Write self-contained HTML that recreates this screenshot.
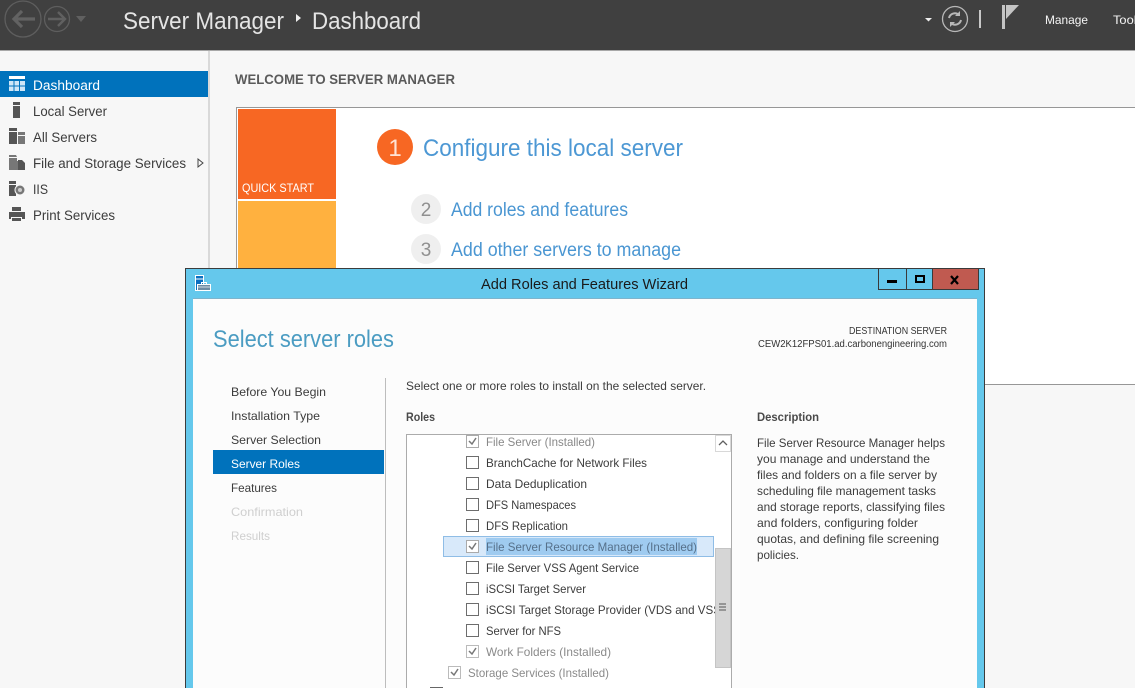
<!DOCTYPE html>
<html><head><meta charset="utf-8"><style>
html,body{margin:0;padding:0;width:1135px;height:688px;overflow:hidden;background:#fff}
svg{display:block}
text{font-family:"Liberation Sans",sans-serif;font-size:12px;fill:#3c3c3c}
</style></head><body>
<svg width="1135" height="688" viewBox="0 0 1135 688" xmlns="http://www.w3.org/2000/svg">
<defs><clipPath id="lst"><rect x="407" y="435" width="308" height="253"/></clipPath></defs>
<rect width="1135" height="688" fill="#f7f7f7"/>
<rect width="1135" height="50" fill="#404040"/>
<rect y="50" width="1135" height="1" fill="#a8a8a8"/>
<rect x="208" y="51" width="2" height="637" fill="#d9d9d9"/>

<!-- header nav -->
<g fill="none" stroke="#5e5e5e" stroke-width="1.300">
<circle cx="23" cy="19" r="18"/>
<circle cx="57" cy="19" r="12.500"/>
</g>
<path d="M35 19H14M22 11l-8 8 8 8" fill="none" stroke="#626262" stroke-width="3.200"/>
<path d="M48 19H65M58 12l7 7-7 7" fill="none" stroke="#606060" stroke-width="2.400"/>
<path d="M76 16h10l-5 6z" fill="#606060"/>
<text x="123" y="29" style="font-size:24px;fill:#e4e4e4" textLength="161" lengthAdjust="spacingAndGlyphs">Server Manager</text>
<path d="M296 14l5 4-5 4z" fill="#eee"/>
<text x="312" y="29" style="font-size:24px;fill:#e4e4e4" textLength="109" lengthAdjust="spacingAndGlyphs">Dashboard</text>
<path d="M925 18h7l-3.500 3.500z" fill="#eee"/>
<circle cx="955" cy="19" r="12.500" fill="none" stroke="#b8b8b8" stroke-width="1.300"/>
<path d="M949 18a6 6 0 0 1 10-3M961 20a6 6 0 0 1-10 3" fill="none" stroke="#b8b8b8" stroke-width="2"/>
<path d="M960 11v5h-5zM950 27v-5h5z" fill="#b8b8b8"/>
<rect x="979" y="10" width="2" height="18" fill="#c8c8c8"/>
<rect x="1002" y="5" width="3" height="24" fill="#c4c4c4"/>
<path d="M1006 5h13l-13 14z" fill="#c4c4c4"/>
<text x="1045" y="24" style="fill:#f5f5f5" textLength="43" lengthAdjust="spacingAndGlyphs">Manage</text>
<text x="1113" y="24" style="fill:#f5f5f5" textLength="30" lengthAdjust="spacingAndGlyphs">Tools</text>

<!-- sidebar -->
<rect y="71" width="208" height="26" fill="#0072bc"/>
<g fill="#cfe6f7"><rect x="9" y="76" width="16" height="3" fill="#fff"/><rect x="9" y="81" width="4.500" height="4.500"/><rect x="14.500" y="81" width="4.500" height="4.500"/><rect x="20" y="81" width="5" height="4.500"/><rect x="9" y="86.500" width="4.500" height="4.500"/><rect x="14.500" y="86.500" width="4.500" height="4.500"/><rect x="20" y="86.500" width="5" height="4.500"/></g>
<text x="33" y="90" style="font-size:13.500px;fill:#fff" textLength="67" lengthAdjust="spacingAndGlyphs">Dashboard</text>
<rect x="13" y="102" width="7" height="3" fill="#555"/><rect x="13" y="106" width="7" height="12" fill="#555"/>
<text x="33" y="116" style="font-size:13.500px" textLength="74" lengthAdjust="spacingAndGlyphs">Local Server</text>
<rect x="9" y="128" width="8" height="3" fill="#555"/><rect x="9" y="132" width="8" height="12" fill="#555"/><rect x="18" y="132" width="7" height="3" fill="#777"/><rect x="18" y="136" width="7" height="8" fill="#777"/>
<text x="33" y="142" style="font-size:13.500px" textLength="64" lengthAdjust="spacingAndGlyphs">All Servers</text>
<path d="M9 155h7l1 2h-8zM9 158h8v3h1v9H9z" fill="#777"/><path d="M18 160h4l3 3v7h-7z" fill="#555"/>
<text x="33" y="168" style="font-size:13.500px" textLength="153" lengthAdjust="spacingAndGlyphs">File and Storage Services</text>
<path d="M198 159l5 4-5 4z" fill="none" stroke="#444"/>
<rect x="9" y="181" width="7" height="3" fill="#555"/><rect x="9" y="185" width="7" height="11" fill="#555"/><circle cx="20" cy="190" r="5" fill="#777" stroke="#f7f7f7"/><circle cx="20" cy="190" r="2" fill="#ccc"/>
<text x="33" y="194" style="font-size:13.500px" textLength="15" lengthAdjust="spacingAndGlyphs">IIS</text>
<path d="M12 207h9v4h-9zM9 212h16v7h-3v-2H11v2H9zM12 218h9v3h-9z" fill="#555"/>
<text x="33" y="220" style="font-size:13.500px" textLength="82" lengthAdjust="spacingAndGlyphs">Print Services</text>

<!-- welcome -->
<text x="235" y="84" style="font-size:13.500px;font-weight:bold;fill:#5a5a5a" textLength="220" lengthAdjust="spacingAndGlyphs">WELCOME TO SERVER MANAGER</text>
<rect x="236.500" y="107.500" width="900" height="277" fill="#fff" stroke="#979797"/>
<rect x="238" y="109" width="98" height="90" fill="#f76723"/>
<rect x="238" y="201" width="98" height="70" fill="#ffb13f"/>
<text x="242" y="192" style="fill:#fff" textLength="72" lengthAdjust="spacingAndGlyphs">QUICK START</text>
<circle cx="395" cy="147" r="18" fill="#f76723"/>
<text x="395" y="156" text-anchor="middle" style="font-size:24px;fill:#ffe3d5">1</text>
<text x="423" y="156" style="font-size:24px;fill:#4d98d4" textLength="260" lengthAdjust="spacingAndGlyphs">Configure this local server</text>
<circle cx="426" cy="209" r="15" fill="#efefef"/><circle cx="426" cy="249" r="15" fill="#efefef"/>
<text x="426" y="216" text-anchor="middle" style="font-size:19px;fill:#909090">2</text>
<text x="426" y="256" text-anchor="middle" style="font-size:19px;fill:#909090">3</text>
<text x="451" y="216" style="font-size:19px;fill:#4a96d2" textLength="177" lengthAdjust="spacingAndGlyphs">Add roles and features</text>
<text x="451" y="256" style="font-size:19px;fill:#4a96d2" textLength="230" lengthAdjust="spacingAndGlyphs">Add other servers to manage</text>

<!-- wizard -->
<rect x="185" y="268" width="800" height="420" fill="#3c3c3c"/>
<rect x="186" y="269" width="798" height="419" fill="#65c8ec"/>
<rect x="193" y="298" width="784" height="1" fill="#7eb4cc"/>
<rect x="193" y="299" width="784" height="389" fill="#fcfcfc"/>
<rect x="195.500" y="275.500" width="8" height="15" fill="#0a6fc0" stroke="#fff"/>
<path d="M196 279h7" stroke="#fff"/>
<path d="M197.500 284.500h13v6h-13z" fill="#6f8ca3" stroke="#fff"/>
<path d="M201.500 284v-1.500h5v1.500" fill="none" stroke="#fff"/>
<path d="M198 287h12" stroke="#fff" stroke-width=".7"/>
<text x="481" y="289" style="font-size:14.500px;fill:#1a1a1a" textLength="207" lengthAdjust="spacingAndGlyphs">Add Roles and Features Wizard</text>
<rect x="878.500" y="268.500" width="28" height="21" fill="#65c8ec" stroke="#3a3a3a"/>
<rect x="906.500" y="268.500" width="26" height="21" fill="#65c8ec" stroke="#3a3a3a"/>
<rect x="932.500" y="268.500" width="46" height="21" fill="#c05a50" stroke="#3a3a3a"/>
<rect x="887" y="280" width="10" height="3" fill="#000"/>
<rect x="916" y="276" width="8" height="6" fill="none" stroke="#000" stroke-width="2"/>
<path d="M951 276l7 8M958 276l-7 8" stroke="#000" stroke-width="2.200"/>

<text x="213" y="347" style="font-size:24px;fill:#4b9cc2" textLength="181" lengthAdjust="spacingAndGlyphs">Select server roles</text>
<text x="947" y="334" text-anchor="end" style="font-size:10px;fill:#333" textLength="98" lengthAdjust="spacingAndGlyphs">DESTINATION SERVER</text>
<text x="758" y="347" style="font-size:10px;fill:#333" textLength="189" lengthAdjust="spacingAndGlyphs">CEW2K12FPS01.ad.carbonengineering.com</text>

<rect x="385" y="378" width="1" height="310" fill="#bdbdbd"/>
<rect x="213" y="450" width="171" height="24" fill="#0072bc"/>
<text x="231" y="396" textLength="95" lengthAdjust="spacingAndGlyphs">Before You Begin</text>
<text x="231" y="420" textLength="89" lengthAdjust="spacingAndGlyphs">Installation Type</text>
<text x="231" y="444" textLength="90" lengthAdjust="spacingAndGlyphs">Server Selection</text>
<text x="231" y="468" style="fill:#fff" textLength="69" lengthAdjust="spacingAndGlyphs">Server Roles</text>
<text x="231" y="492" textLength="46" lengthAdjust="spacingAndGlyphs">Features</text>
<text x="231" y="516" style="fill:#cfcfcf" textLength="72" lengthAdjust="spacingAndGlyphs">Confirmation</text>
<text x="231" y="540" style="fill:#cfcfcf" textLength="39" lengthAdjust="spacingAndGlyphs">Results</text>

<text x="406" y="390" textLength="300" lengthAdjust="spacingAndGlyphs">Select one or more roles to install on the selected server.</text>
<text x="406" y="421" style="font-weight:bold;fill:#4a4a4a" textLength="29" lengthAdjust="spacingAndGlyphs">Roles</text>
<text x="757" y="421" style="font-weight:bold;fill:#4a4a4a" textLength="62" lengthAdjust="spacingAndGlyphs">Description</text>
<text x="757" y="447" textLength="188" lengthAdjust="spacingAndGlyphs">File Server Resource Manager helps</text>
<text x="757" y="463" textLength="173" lengthAdjust="spacingAndGlyphs">you manage and understand the</text>
<text x="757" y="479" textLength="180" lengthAdjust="spacingAndGlyphs">files and folders on a file server by</text>
<text x="757" y="495" textLength="179" lengthAdjust="spacingAndGlyphs">scheduling file management tasks</text>
<text x="757" y="511" textLength="188" lengthAdjust="spacingAndGlyphs">and storage reports, classifying files</text>
<text x="757" y="527" textLength="161" lengthAdjust="spacingAndGlyphs">and folders, configuring folder</text>
<text x="757" y="543" textLength="182" lengthAdjust="spacingAndGlyphs">quotas, and defining file screening</text>
<text x="757" y="559" textLength="42" lengthAdjust="spacingAndGlyphs">policies.</text>

<!-- list -->
<rect x="406.500" y="434.500" width="325" height="260" fill="#fff" stroke="#ababab"/>
<rect x="715" y="435" width="16" height="253" fill="#fff"/>
<rect x="715.500" y="435.500" width="15" height="16" fill="#fff" stroke="#d8d8d8"/>
<path d="M719 445l4-4 4 4" fill="none" stroke="#606060" stroke-width="1.300"/>
<rect x="715.500" y="548.500" width="15" height="119" fill="#d6d6d6" stroke="#c4c4c4"/>
<path d="M719 604h7M719 607h7M719 610h7" stroke="#555" stroke-width="1"/>
<g clip-path="url(#lst)">
<rect x="443.500" y="536.500" width="270" height="20" fill="#d8e9fa" stroke="#8fbde6"/>
<rect x="486" y="538" width="211" height="17" fill="#9fcbf0"/>
<g fill="#fff" stroke="#6d6d6d">
<rect x="466.500" y="435.500" width="12" height="12" stroke="#aaa"/>
<rect x="466.500" y="456.500" width="12" height="12"/>
<rect x="466.500" y="477.500" width="12" height="12"/>
<rect x="466.500" y="498.500" width="12" height="12"/>
<rect x="466.500" y="519.500" width="12" height="12"/>
<rect x="466.500" y="540.500" width="12" height="12" stroke="#aaa"/>
<rect x="466.500" y="561.500" width="12" height="12"/>
<rect x="466.500" y="582.500" width="12" height="12"/>
<rect x="466.500" y="603.500" width="12" height="12"/>
<rect x="466.500" y="624.500" width="12" height="12"/>
<rect x="466.500" y="645.500" width="12" height="12" stroke="#bbb"/>
<rect x="448.500" y="666.500" width="12" height="12" stroke="#bbb"/>
</g>
<g fill="none" stroke="#777" stroke-width="1.500">
<path d="M469 441l3 3 4-6"/><path d="M469 546l3 3 4-6"/><path d="M469 651l3 3 4-6"/><path d="M451 672l3 3 4-6"/>
</g>
<rect x="430" y="687" width="13" height="1" fill="#666"/>
<text x="486" y="446" style="fill:#888" textLength="109" lengthAdjust="spacingAndGlyphs">File Server (Installed)</text>
<text x="486" y="467" textLength="161" lengthAdjust="spacingAndGlyphs">BranchCache for Network Files</text>
<text x="486" y="488" textLength="101" lengthAdjust="spacingAndGlyphs">Data Deduplication</text>
<text x="486" y="509" textLength="90" lengthAdjust="spacingAndGlyphs">DFS Namespaces</text>
<text x="486" y="530" textLength="82" lengthAdjust="spacingAndGlyphs">DFS Replication</text>
<text x="486" y="551" style="fill:#56708a" textLength="211" lengthAdjust="spacingAndGlyphs">File Server Resource Manager (Installed)</text>
<text x="486" y="572" textLength="153" lengthAdjust="spacingAndGlyphs">File Server VSS Agent Service</text>
<text x="486" y="593" textLength="100" lengthAdjust="spacingAndGlyphs">iSCSI Target Server</text>
<text x="486" y="614" textLength="235" lengthAdjust="spacingAndGlyphs">iSCSI Target Storage Provider (VDS and VSS</text>
<text x="486" y="635" textLength="75" lengthAdjust="spacingAndGlyphs">Server for NFS</text>
<text x="486" y="656" style="fill:#8a8a8a" textLength="125" lengthAdjust="spacingAndGlyphs">Work Folders (Installed)</text>
<text x="468" y="677" style="fill:#8a8a8a" textLength="141" lengthAdjust="spacingAndGlyphs">Storage Services (Installed)</text>
</g>
</svg>
</body></html>
